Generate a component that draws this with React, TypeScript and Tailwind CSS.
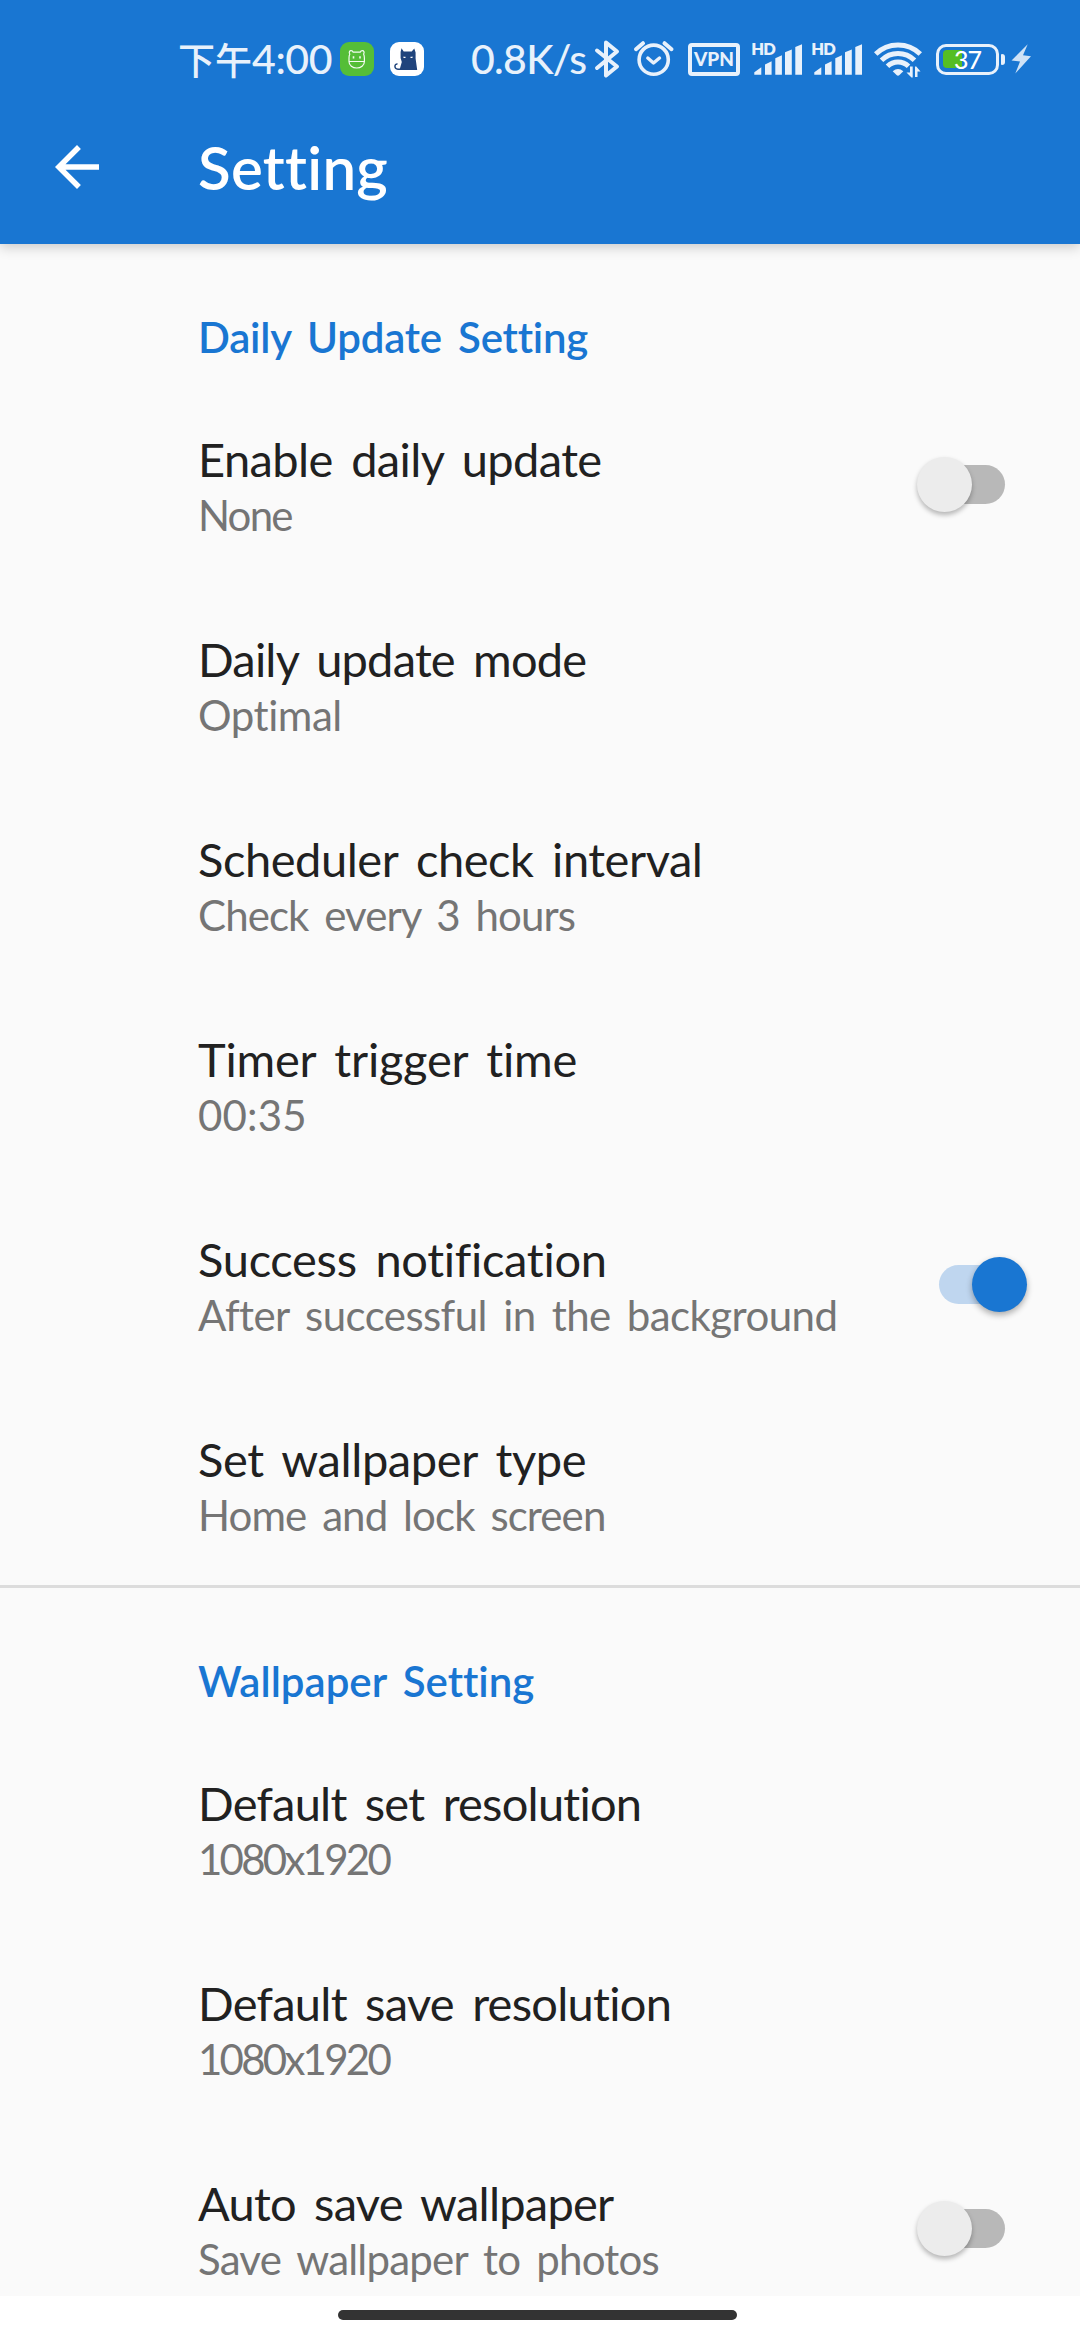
import type { ReactNode } from 'react';

type Item = {
  title: string;
  titleClass: string;
  summary: string;
  summaryClass: string;
  toggle?: 'on' | 'off';
};

const dailyItems: Item[] = [
  { title: 'Enable daily update', titleClass: 'tracking-[-0.6px]', summary: 'None', summaryClass: 'tracking-[-1.8px]', toggle: 'off' },
  { title: 'Daily update mode', titleClass: 'tracking-[-0.8px]', summary: 'Optimal', summaryClass: 'tracking-[-0.45px]' },
  { title: 'Scheduler check interval', titleClass: 'tracking-[-0.45px]', summary: 'Check every 3 hours', summaryClass: 'tracking-[-0.93px]' },
  { title: 'Timer trigger time', titleClass: 'tracking-[-0.2px]', summary: '00:35', summaryClass: 'tracking-[0.15px]' },
  { title: 'Success notification', titleClass: 'tracking-[-0.3px]', summary: 'After successful in the background', summaryClass: 'tracking-[-0.57px]', toggle: 'on' },
  { title: 'Set wallpaper type', titleClass: 'tracking-[-0.4px]', summary: 'Home and lock screen', summaryClass: 'tracking-[-0.91px]' },
];

const wallpaperItems: Item[] = [
  { title: 'Default set resolution', titleClass: 'tracking-[-0.76px]', summary: '1080x1920', summaryClass: 'tracking-[-2.75px]' },
  { title: 'Default save resolution', titleClass: 'tracking-[-0.72px]', summary: '1080x1920', summaryClass: 'tracking-[-2.75px]' },
  { title: 'Auto save wallpaper', titleClass: 'tracking-[-0.75px]', summary: 'Save wallpaper to photos', summaryClass: 'tracking-[-0.78px]', toggle: 'off' },
];

function BearIcon() {
  return (
    <svg width="34" height="34" viewBox="0 0 34 34" className="shrink-0 rounded-[9px] bg-[#55be37]" fill="none" stroke="#f4fbf1" strokeWidth="1.2" strokeLinejoin="round">
      <path d="M9 19.500V16c0-1.800.3-3 .8-4C8.600 10.500 9.600 8.700 11 8.700c1.200 0 1.900.7 2.200 1.500h7c.3-.8 1-1.500 2.200-1.500 1.400 0 2.400 1.800 1.200 3.300.5 1 .8 2.200.8 4v3.500c0 4-3.600 6.500-7.700 6.500S9 23.500 9 19.500ZM9 19.500h15.400" />
      <path d="M13.500 14.200v2.400M20 14.200v2.400" strokeWidth="1.600" />
    </svg>
  );
}

function CatIcon() {
  return (
    <svg width="34" height="34" viewBox="0 0 34 34" className="shrink-0 rounded-[9px] bg-white">
      <path d="M11.500 6.300 13.700 9.500h8L24.300 6.500 25.600 10.500V16.500L27.200 28H9.500L11.800 20 10.600 16V10Z" fill="#20447c" />
      <path d="M7.500 22c-3-.5-4 5 .5 5.200h3" fill="none" stroke="#20447c" strokeWidth="1.500" />
      <path d="M13 14.700h2.500v1.300H13.800ZM20.500 14.700H23l-.8 1.300h-1.700Z" fill="#fff" />
    </svg>
  );
}

function Signal() {
  return (
    <svg width="50" height="40" viewBox="0 0 50 40" className="shrink-0" fill="#e8f1fb">
      <text x="-0.800" y="16" fontFamily="Lato" fontWeight="800" fontSize="16.500" textLength="24.500">HD</text>
      <path d="M2.300 33.200 9.300 28.200V35.700H2.300ZM13 25.500 19.600 22.300V35.700H13ZM23.300 19.200 29.900 16.300V35.700H23.300ZM33 13.200 39.800 10.400V35.700H33ZM43.300 8 50 5.200V35.700H43.300Z" />
    </svg>
  );
}

function StatusBar() {
  return (
    <div className="flex h-[90px] items-center pt-7 pl-[178px] text-[#e8f1fb]">
      <div className="flex w-[162px] shrink-0 items-center whitespace-nowrap">
        <span className="font-['Noto_Sans_CJK_SC',sans-serif] text-[37px] leading-10 font-medium">下午</span>
        <span className="text-[41px] leading-10 font-medium tracking-[-0.4px]">4:00</span>
      </div>
      <BearIcon />
      <div className="w-4 shrink-0" />
      <CatIcon />
      <div className="ml-[47px] w-[121px] shrink-0 text-[41px] leading-10 font-medium tracking-[-0.7px] whitespace-nowrap">0.8K/s</div>
      <svg width="30" height="40" viewBox="0 0 30 40" className="shrink-0" fill="none" stroke="#e8f1fb" strokeWidth="4" strokeLinecap="round" strokeLinejoin="round">
        <path d="M5 11.500 25 27.500 14 36.500V3.500L25 12.500 5 29" />
      </svg>
      <svg width="44" height="40" viewBox="0 0 44 40" className="ml-2.5 shrink-0" fill="none" stroke="#e8f1fb" strokeWidth="4" strokeLinecap="round">
        <circle cx="21.700" cy="20.700" r="14.600" strokeWidth="3.600" />
        <path d="m15.800 19 5.700 5 6-5" strokeWidth="3.400" strokeLinejoin="round" />
        <path d="M4 10.200 11 4.200M32.500 4.200 39.500 10.200" />
      </svg>
      <div className="ml-3 flex h-[33px] w-[52px] shrink-0 items-center justify-center rounded-[4px] border-4 border-[#e8f1fb] text-[19px] leading-5 font-black">VPN</div>
      <div className="ml-3 flex gap-2.5">
        <Signal />
        <Signal />
      </div>
      <svg width="48" height="40" viewBox="0 0 48 40" className="ml-3 shrink-0" fill="none" stroke="#e8f1fb" strokeWidth="5">
        <path d="M1.700 15A32 32 0 0 1 46.300 15M7.500 21.200A23.500 23.500 0 0 1 40.500 21.200M13.500 27.300A15 15 0 0 1 34.500 27.300" />
        <path d="M18.700 32.200Q24 27.800 29.300 32.200L25.500 36Q24 37.400 22.500 36Z" fill="#e8f1fb" stroke="none" />
        <path d="M32.500 33.500H36V27.500H38.700V38.500H37.500ZM41 27.500H42.300L46.500 32.500H43.500V38H41Z" fill="#e8f1fb" stroke="#1976d2" strokeWidth="1.200" paintOrder="stroke" />
      </svg>
      <div className="relative ml-3.5 flex h-[31px] w-[63px] shrink-0 items-center rounded-[10px] border-[3.5px] border-[#e8f1fb] pl-1">
        <div className="h-[18px] w-[19px] rounded-l-[4px] bg-[#55be24]" />
        <span className="absolute left-[15px] text-[25px] leading-6 font-medium tracking-[-1px] text-white">37</span>
      </div>
      <div className="ml-0.5 h-[11px] w-1 shrink-0 rounded-r-[3px] rounded-l-[1px] bg-[#e8f1fb]" />
      <svg width="21" height="40" viewBox="0 0 21 40" className="ml-1.5 shrink-0" fill="#cfe2f6">
        <path d="M16.700 5.300.5 21.500 9 22.500 4.300 34.500 20 17.300 12 16.200Z" />
      </svg>
    </div>
  );
}

function Toggle({ on }: { on: boolean }) {
  return (
    <div className="relative mt-[72px] mr-[53px] flex h-[55px] w-[110px] shrink-0 items-center justify-center">
      <div className={on ? 'h-[39px] w-[66px] rounded-full bg-[#bfd6ef]' : 'h-[39px] w-[66px] rounded-full bg-[#b8b8b8]'} />
      <div
        className={
          on
            ? 'absolute top-0 right-0 size-[55px] rounded-full bg-[#1976d2] shadow-[0_3px_6px_rgba(0,0,0,0.32)]'
            : 'absolute top-0 left-0 size-[55px] rounded-full bg-[#ececec] shadow-[0_3px_5px_rgba(0,0,0,0.28)]'
        }
      />
    </div>
  );
}

function Row({ item }: { item: Item }) {
  return (
    <div className="flex h-[200px] justify-between pl-[198px] whitespace-nowrap">
      <div className="pt-[46px]">
        <div className={`text-[47px] leading-14 text-[#212121] [word-spacing:7px] ${item.titleClass}`}>{item.title}</div>
        <div className={`text-[42px] leading-14 text-[#757575] [word-spacing:6px] ${item.summaryClass}`}>{item.summary}</div>
      </div>
      {item.toggle && <Toggle on={item.toggle === 'on'} />}
    </div>
  );
}

function Category({ className, children }: { className: string; children: ReactNode }) {
  return (
    <div className={`h-[141px] pt-[65px] pl-[198px] text-[42px] leading-14 font-semibold text-[#1976d2] [word-spacing:6px] ${className}`}>
      {children}
    </div>
  );
}

export default function App() {
  return (
    <div className="flex h-[2340px] w-[1080px] flex-col overflow-hidden bg-[#fafafa] font-[Lato,sans-serif] [font-variant-ligatures:none]">
      <header className="relative z-10 h-[244px] shrink-0 bg-[#1976d2] shadow-[0_3px_12px_rgba(0,0,0,0.2)]">
        <StatusBar />
        <div className="flex h-[154px] items-center pl-11 text-white">
          <svg width="66" height="66" viewBox="0 0 24 24" fill="currentColor">
            <path d="M20 11H7.830l5.590-5.590L12 4l-8 8 8 8 1.410-1.410L7.830 13H20v-2z" />
          </svg>
          <h1 className="ml-[88px] text-[60px] leading-[72px] font-semibold tracking-[0.3px]">Setting</h1>
        </div>
      </header>
      <main className="min-h-0 flex-1 overflow-hidden">
        <Category className="tracking-[-0.23px]">Daily Update Setting</Category>
        {dailyItems.map((item) => (
          <Row key={item.title} item={item} />
        ))}
        <div className="h-[3px] bg-[#dcdcdc]" />
        <Category className="tracking-[0px]">Wallpaper Setting</Category>
        {wallpaperItems.map((item) => (
          <Row key={item.title} item={item} />
        ))}
      </main>
      <div className="flex h-11 shrink-0 justify-center bg-white pt-3.5">
        <div className="mr-[5px] h-2.5 w-[399px] rounded-full bg-[#333333]" />
      </div>
    </div>
  );
}
